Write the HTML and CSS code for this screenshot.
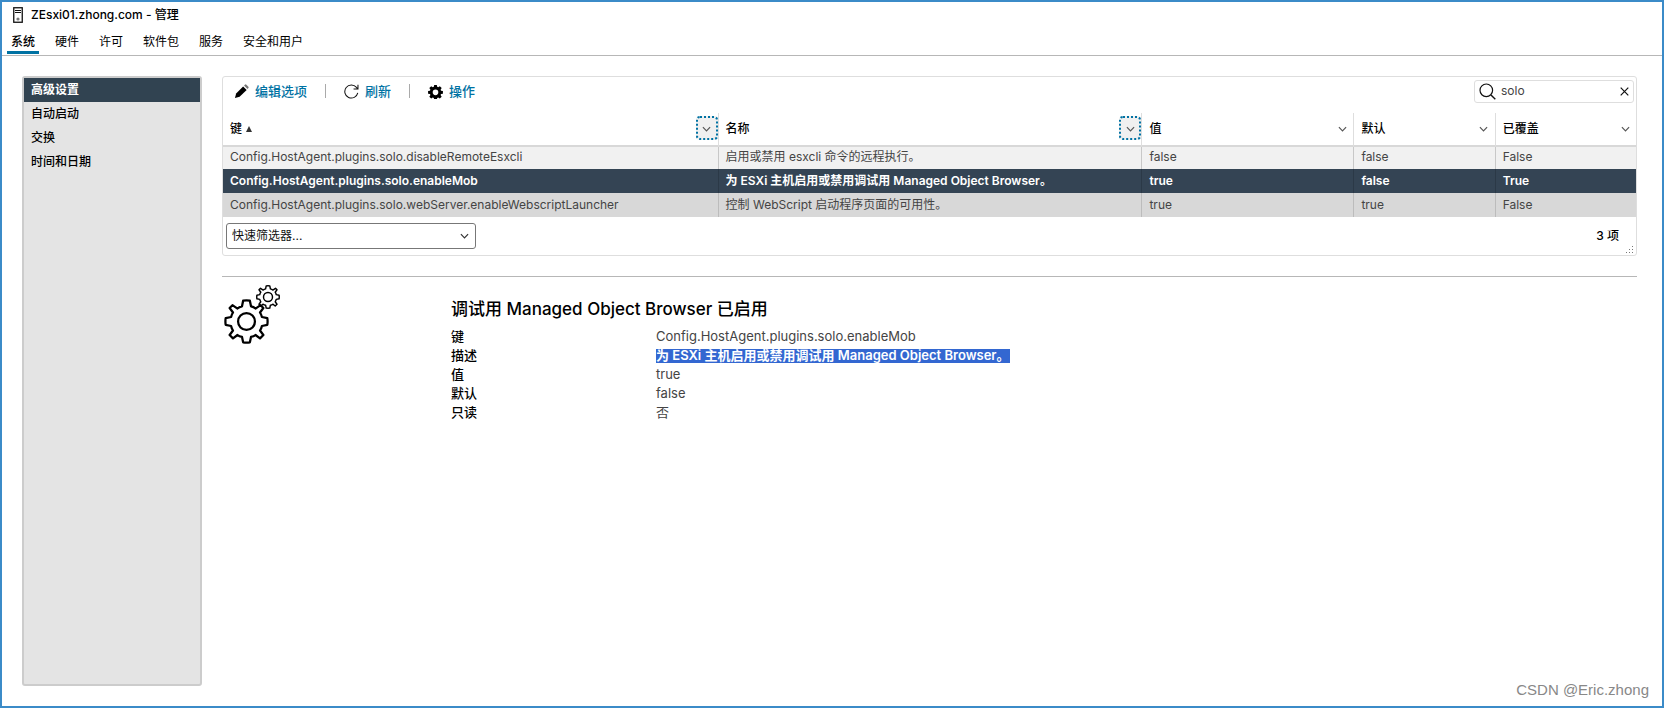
FILE: index.html
```html
<!DOCTYPE html>
<html lang="zh-CN">
<head>
<meta charset="utf-8">
<meta name="viewport" content="width=device-width, initial-scale=1">
<title>ZEsxi01.zhong.com - 管理</title>
<link rel="stylesheet" href="styles.css">
</head>
<body>
<svg class="defs" aria-hidden="true">
  <symbol id="chevron" viewBox="0 0 10 6"><path d="M1 1l4 4 4-4" fill="none" stroke="currentColor" stroke-width="1.3"/></symbol>
  <symbol id="gear-line" viewBox="-20 -20 40 40"><path fill="none" stroke="currentColor" stroke-linejoin="round" d="M-3-18.500Q0-19 3-18.500L4-13.500Q6.500-13 8-11.500L12.500-14.500 15-12 12-8Q13.300-6 13.700-4L18.500-3Q19 0 18.500 3L13.700 4Q13.300 6 12 8L15 12 12 15 8 12Q6.500 13.300 4 13.700L3 18.500Q0 19-3 18.500L-4 13.700Q-6.500 13.300-8 12L-12 15-15 12-12 8Q-13.300 6-13.700 4L-18.500 3Q-19 0-18.500-3L-13.700-4Q-13.300-6-12-8L-15-12-12.500-14.500-8-11.500Q-6.500-13-4-13.500Z"/><circle r="7.500" fill="none" stroke="currentColor"/></symbol>
</svg>
<div class="window">
  <header class="title-bar">
    <svg class="host-icon" viewBox="0 0 10 16" aria-hidden="true"><rect x=".75" y=".75" width="8.500" height="14.500" fill="none" stroke="#111" stroke-width="1.300"/><path d="M2 3.500h6M2 5.500h6" stroke="#111"/><circle cx="5" cy="12" r="1.600" fill="#777"/></svg>
    <h1 class="title">ZEsxi01.zhong.com - 管理</h1>
  </header>
  <nav class="tabs">
    <a class="tab tab-active" href="#system">系统</a>
    <a class="tab" href="#hardware">硬件</a>
    <a class="tab" href="#licensing">许可</a>
    <a class="tab" href="#packages">软件包</a>
    <a class="tab" href="#services">服务</a>
    <a class="tab" href="#security">安全和用户</a>
  </nav>
  <div class="body">
    <nav class="sidebar">
      <a class="side-item side-active" href="#advanced">高级设置</a>
      <a class="side-item" href="#autostart">自动启动</a>
      <a class="side-item" href="#swap">交换</a>
      <a class="side-item" href="#time">时间和日期</a>
    </nav>
    <main class="content">
      <section class="grid">
        <div class="toolbar">
          <button class="action" type="button">
            <svg class="icon" viewBox="0 0 16 16" aria-hidden="true"><path d="M1 15l1.300-5L9.700 2.600l3.800 3.700L6 13.700z"/><path d="M10.700 1.600l.9-.9q.8-.7 1.600 0l2.100 2.100q.7.800 0 1.500l-.9.900z" fill="#777"/></svg>编辑选项</button>
          <span class="sep"></span>
          <button class="action" type="button">
            <svg class="icon" viewBox="0 0 16 16" aria-hidden="true"><path d="M14.700 9.500A7 7 0 1 1 13.300 3.600L14.800 5.300M14.900.8v4.600h-4.700" fill="none" stroke="#111" stroke-width="1.100"/></svg>刷新</button>
          <span class="sep"></span>
          <button class="action" type="button">
            <svg class="icon" viewBox="0 0 16 16" aria-hidden="true"><path fill-rule="evenodd" d="M6.600 1h2.800l.4 2 1.100.5 1.700-1.200 2 2-1.200 1.700.5 1.100 2 .4v2.800l-2 .4-.5 1.100 1.200 1.700-2 2-1.700-1.200-1.100.5-.4 2H6.600l-.4-2-1.100-.5-1.700 1.200-2-2 1.200-1.700-.5-1.100-2-.4V7.500l2-.4.5-1.100-1.200-1.700 2-2 1.700 1.200 1.100-.5zM8 5.900a3 3 0 1 0 0 6 3 3 0 0 0 0-6z"/></svg>操作</button>
          <div class="search">
            <svg class="search-icon" viewBox="0 0 17 17" aria-hidden="true"><circle cx="7.300" cy="7.300" r="6.300" fill="none" stroke="#111" stroke-width="1.200"/><path d="M12 12l4.300 4.300" stroke="#111" stroke-width="1.400"/></svg>
            <input class="search-input" type="text" value="solo" aria-label="搜索">
            <button class="clear" type="button" aria-label="清除"><svg class="clear-icon" viewBox="0 0 9 9" aria-hidden="true"><path d="M.7.700l7.600 7.600M8.300.700L.7 8.300" stroke="#111" stroke-width="1.200"/></svg></button>
          </div>
        </div>
        <table class="table">
          <colgroup><col class="c-key"><col class="c-name"><col class="c-value"><col class="c-small"><col class="c-small"></colgroup>
          <thead>
            <tr>
              <th><div class="head"><span>键 <span class="sort"></span></span><button class="menu menu-focus" type="button" aria-label="键"><svg class="chevron"><use href="#chevron"/></svg></button></div></th>
              <th><div class="head"><span>名称</span><button class="menu menu-focus" type="button" aria-label="名称"><svg class="chevron"><use href="#chevron"/></svg></button></div></th>
              <th><div class="head"><span>值</span><button class="menu" type="button" aria-label="值"><svg class="chevron"><use href="#chevron"/></svg></button></div></th>
              <th><div class="head"><span>默认</span><button class="menu" type="button" aria-label="默认"><svg class="chevron"><use href="#chevron"/></svg></button></div></th>
              <th><div class="head"><span>已覆盖</span><button class="menu" type="button" aria-label="已覆盖"><svg class="chevron"><use href="#chevron"/></svg></button></div></th>
            </tr>
          </thead>
          <tbody>
            <tr class="row-light"><td>Config.HostAgent.plugins.solo.disableRemoteEsxcli</td><td>启用或禁用 esxcli 命令的远程执行。</td><td>false</td><td>false</td><td>False</td></tr>
            <tr class="row-selected"><td>Config.HostAgent.plugins.solo.enableMob</td><td>为 ESXi 主机启用或禁用调试用 Managed Object Browser。</td><td>true</td><td>false</td><td>True</td></tr>
            <tr class="row-hover"><td>Config.HostAgent.plugins.solo.webServer.enableWebscriptLauncher</td><td>控制 WebScript 启动程序页面的可用性。</td><td>true</td><td>true</td><td>False</td></tr>
          </tbody>
        </table>
        <div class="grid-footer">
          <div class="select-wrap">
            <select class="filter" aria-label="快速筛选器"><option>快速筛选器...</option></select>
            <svg class="chevron select-chevron"><use href="#chevron"/></svg>
          </div>
          <span class="count">3 项</span>
          <svg class="grip" viewBox="0 0 8 8" aria-hidden="true"><path d="M6 0h1v1H6zM3 3h1v1H3zM6 3h1v1H6zM0 6h1v1H0zM3 6h1v1H3zM6 6h1v1H6z" fill="#777"/></svg>
        </div>
      </section>
      <section class="detail">
        <svg class="gears" viewBox="0 0 58 60" aria-hidden="true"><use href="#gear-line" x="2" y="15" width="45" height="45" stroke-width="2"/><use href="#gear-line" x="34" y="1" width="24" height="24" stroke-width="2.400"/></svg>
        <div class="detail-text">
          <h2 class="detail-title">调试用 Managed Object Browser 已启用</h2>
          <dl class="props">
            <dt>键</dt><dd>Config.HostAgent.plugins.solo.enableMob</dd>
            <dt>描述</dt><dd><mark class="selection">为 ESXi 主机启用或禁用调试用 Managed Object Browser。</mark></dd>
            <dt>值</dt><dd>true</dd>
            <dt>默认</dt><dd>false</dd>
            <dt>只读</dt><dd>否</dd>
          </dl>
        </div>
      </section>
    </main>
  </div>
  <div class="watermark">CSDN @Eric.zhong</div>
</div>
</body>
</html>
```
FILE: styles.css
```css
* { box-sizing: border-box; }

body {
  margin: 0;
  font: 12px/24px Inter, "Noto Sans CJK SC", sans-serif;
  color: #000;
}

button, input, select { font: inherit; }
a { color: inherit; text-decoration: none; }
.defs { position: absolute; width: 0; height: 0; }

.window {
  position: relative;
  display: flex;
  flex-direction: column;
  min-height: 100vh;
  border: 2px solid #3b8bc8;
  background: #fff;
}

.title-bar {
  display: flex;
  align-items: center;
  gap: 8px;
  height: 25px;
  padding-left: 11px;
}
.host-icon { width: 10px; height: 16px; }
.title { margin: 0; font-size: 12px; font-weight: 500; }

.tabs {
  display: flex;
  gap: 12px;
  height: 29px;
  padding: 3px 0 1px 5px;
  border-bottom: 1px solid #b7b7b7;
}
.tab { padding: 0 4px; }
.tab-active {
  font-weight: 500;
  border-bottom: 3px solid #0072a3;
  line-height: 23px;
}

.body {
  flex: 1;
  display: flex;
  gap: 20px;
  padding: 20px 25px 20px 20px;
}

.sidebar {
  flex: none;
  width: 180px;
  border: 2px solid #ccc;
  border-radius: 3px;
  background: #e4e4e4;
}
.side-item { display: block; padding-left: 7px; font-weight: 500; }
.side-active { background: #314351; color: #fff; font-weight: 700; }

.content { flex: 1; min-width: 0; }

.grid { border: 1px solid #dedede; border-radius: 3px; }
.toolbar { display: flex; align-items: center; height: 36px; padding: 0 2px 8px 11px; }
.action {
  display: flex;
  align-items: center;
  gap: 6px;
  padding: 0;
  border: 0;
  background: none;
  color: #0072a3;
  font-size: 13px;
  font-weight: 500;
}
.icon { width: 15px; height: 15px; fill: #000; }
.sep { width: 1px; height: 14px; margin: 0 18px; background: #aaa; }

.search {
  display: flex;
  align-items: center;
  width: 160px;
  height: 23px;
  margin-left: auto;
  padding: 0 4px;
  border: 1px solid #dedede;
  border-radius: 3px;
}
.search-icon { flex: none; width: 17px; height: 17px; }
.search-input { flex: 1; min-width: 0; height: 20px; padding: 0 5px; border: 0; outline: 0; color: #444; }
.clear { display: flex; padding: 0; border: 0; background: none; }
.clear-icon { width: 9px; height: 9px; }

.table { width: 100%; table-layout: fixed; border-collapse: separate; border-spacing: 0; }
.c-key { width: 35%; }
.c-name { width: 30%; }
.c-value { width: 15%; }
.c-small { width: 10%; }
.table th, .table td { padding: 0 0 0 7px; text-align: left; border-left: 1px solid #dedede; }
.table tr > :first-child { border-left: 0; }
.table th { font-weight: 500; border-bottom: 2px solid #d8d8d8; }
.head { display: flex; align-items: center; justify-content: space-between; height: 32px; }
.sort {
  display: inline-block;
  margin: 0 0 1px 1px;
  border: 3px solid transparent;
  border-top: 0;
  border-bottom: 6px solid #333;
}
.menu {
  display: flex;
  align-items: center;
  justify-content: center;
  width: 22px;
  height: 24px;
  margin: 0 0 3px;
  padding: 3px 0 0;
  border: 2px solid transparent;
  border-radius: 4px;
  background: none;
  color: #555;
}
.menu-focus { border: 2px dotted #0072a3; background: #f0f0f0; }
.chevron { width: 9px; height: 6px; }

.table td { height: 24px; line-height: 24px; color: #444; white-space: nowrap; overflow: hidden; }
.table .row-light td { height: 22px; padding-bottom: 2px; line-height: 20px; background: #f1f1f1; border-color: #c8c8c8; }
.table .row-selected td { background: #344454; border-color: #2b3947; color: #fff; font-weight: 600; }
.table .row-hover td { background: #d8d8d8; border-color: #bcbcbc; }

.grid-footer { position: relative; display: flex; align-items: center; justify-content: space-between; height: 38px; padding: 0 17px 0 3px; }
.select-wrap { position: relative; display: flex; width: 250px; }
.filter {
  appearance: none;
  width: 100%;
  height: 26px;
  padding: 0 24px 0 5px;
  border: 1px solid #777;
  border-radius: 3px;
  background: #fff;
  color: #111;
}
.select-chevron { position: absolute; right: 7px; top: 10px; color: #333; pointer-events: none; }
.count { font-weight: 500; }
.grip { position: absolute; right: 2px; bottom: 1px; width: 8px; height: 8px; }

.detail { display: flex; margin-top: 20px; padding-top: 7px; border-top: 1px solid #b7b7b7; }
.gears { flex: none; width: 58px; height: 60px; margin-right: 171px; }
.detail-title { margin: 0 0 6px; padding-top: 13px; font-size: 17px; line-height: 24px; font-weight: 500; }
.props { display: grid; grid-template-columns: 205px auto; margin: 0; font-size: 13px; line-height: 19px; }
.props dt { font-weight: 500; }
.props dd { margin: 0; color: #444; }
.selection { display: block; width: max-content; height: 14px; margin-top: 3px; line-height: 12px; background: #3367d1; color: #fff; font-weight: 600; }

.watermark {
  position: absolute;
  right: 13px;
  bottom: 4px;
  font: 15px/24px "Liberation Sans", sans-serif;
  color: #888;
}
```
